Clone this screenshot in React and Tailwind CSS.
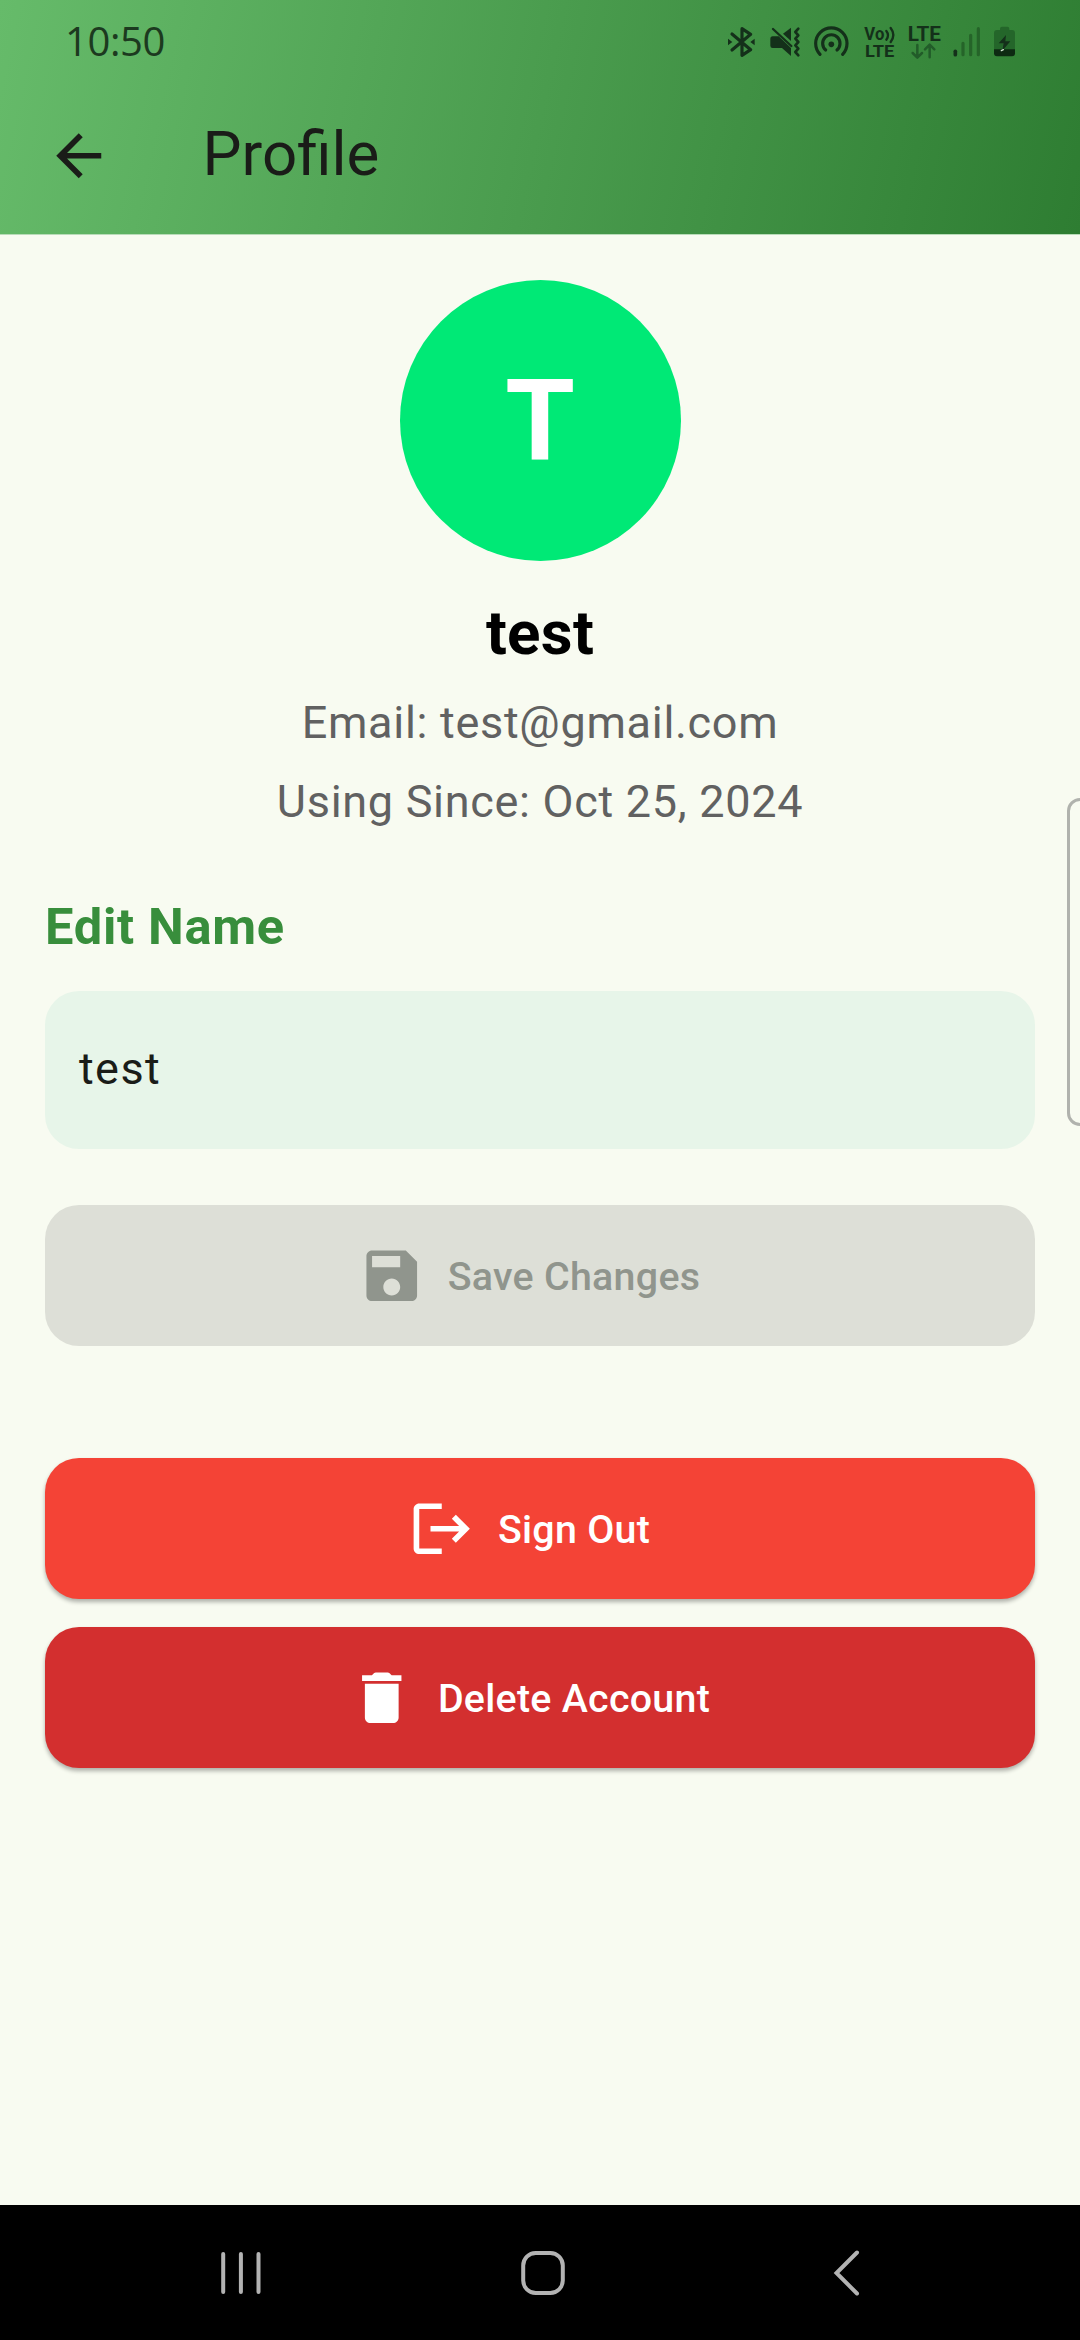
const INK = "#14301a";

function StatusIcons() {
  return (
    <div className="flex items-start">
      {/* Bluetooth */}
      <svg className="w-[28px] h-[32px]" viewBox="0 0 84 96" fill="none" stroke={INK} strokeWidth="9.5" strokeLinejoin="round" strokeLinecap="round">
        <path d="M12 24 L68 71 L42 88 V8 L68 25 L12 72" />
        <path d="M0 38 L13 48 L0 58Z M80 38 L67 48 L80 58Z" fill={INK} stroke="none" />
      </svg>
      {/* Muted, vibrating */}
      <svg className="ml-[14px] w-[31px] h-[32px]" viewBox="0 0 93 96" fill={INK}>
        <path d="M1 39 Q1 31 8 31 H26 L63 66 V90 L36 66 H8 Q1 66 1 59Z" />
        <path d="M63 5 V45 L39 23Z" />
        <path d="M9 9 L64 60" stroke={INK} strokeWidth="7" strokeLinecap="round" />
        <path d="M85 8 L76 18 L85 28 L76 38 L85 48 L76 58 L85 68 L76 78 L85 88" fill="none" stroke={INK} strokeWidth="8" strokeLinecap="round" strokeLinejoin="round" />
      </svg>
      {/* Hotspot */}
      <svg className="ml-[13px] w-[36px] h-[32px]" viewBox="0 0 108 96" fill="none" stroke={INK} strokeWidth="9.5" strokeLinecap="round">
        <path d="M18 85 A47 47 0 1 1 86 85" />
        <path d="M35 72 A26 26 0 1 1 69 72" />
        <circle cx="52" cy="55" r="8.5" fill={INK} stroke="none" />
      </svg>
      {/* VoLTE */}
      <svg className="ml-[14px] w-[32px] h-[32px] overflow-visible" viewBox="0 0 96 96" fill={INK} fontFamily="Roboto, sans-serif" fontWeight="700">
        <text x="1" y="43" fontSize="53" textLength="60" lengthAdjust="spacingAndGlyphs">Vo</text>
        <path d="M67 15 Q77 28 67 41 M80 6 Q96 27 80 48" fill="none" stroke={INK} strokeWidth="7" strokeLinecap="round" />
        <text x="3" y="93" fontSize="52" textLength="88" lengthAdjust="spacingAndGlyphs">LTE</text>
      </svg>
      {/* LTE data */}
      <svg className="ml-[12px] w-[34px] h-[34px] overflow-visible" viewBox="0 0 102 102" fill={INK} fontFamily="Roboto, sans-serif" fontWeight="700">
        <text x="-1" y="46" fontSize="62" textLength="100" lengthAdjust="spacingAndGlyphs">LTE</text>
        <path d="M28 57 V94 M14 81 L28 95 L42 81 M65 94 V57 M51 70 L65 56 L79 70" fill="none" stroke="#225c29" strokeWidth="7.5" strokeLinecap="round" strokeLinejoin="round" />
      </svg>
      {/* Signal */}
      <svg className="ml-[11px] w-[28px] h-[32px]" viewBox="0 0 84 96" strokeWidth="9.5" strokeLinecap="round">
        <path d="M7 76 V86" stroke={INK} strokeWidth="11" />
        <path d="M30 52 V86 M53 28 V86 M76 8 V86" stroke="#256429" />
      </svg>
      {/* Battery */}
      <svg className="ml-[13px] w-[22px] h-[32px]" viewBox="0 0 66 96">
        <path d="M18 12 V8 Q18 2 24 2 H40 Q46 2 46 8 V12 H54 Q63 12 63 21 V72 H0 V21 Q0 12 9 12Z" fill="#24662a" />
        <path d="M0 70 H63 V82 Q63 91 54 91 H9 Q0 91 0 82Z" fill="#0d2a12" />
        <path d="M36 27 L14 52 H29 L25 74 L49 46 H34Z" fill={INK} />
        <path d="M22 74 L28 71" stroke="#d8ead8" strokeWidth="4" strokeLinecap="round" />
      </svg>
    </div>
  );
}

function ActionButton({ className, path, children }) {
  return (
    <button className={`flex h-[141px] w-full items-center justify-center rounded-[34px] pr-[22px] text-[39.375px] font-medium tracking-[0.28px] ${className}`}>
      <svg className="mr-[22.5px] size-[67.5px]" viewBox="0 0 24 24" fill="currentColor">
        <path d={path} />
      </svg>
      <span className="pt-[2px]">{children}</span>
    </button>
  );
}

const SAVE = "M17 3H5c-1.11 0-2 .9-2 2v14c0 1.1.89 2 2 2h14c1.1 0 2-.9 2-2V7l-4-4zm-5 16c-1.66 0-3-1.34-3-3s1.34-3 3-3 3 1.34 3 3-1.34 3-3 3zm3-10H5V5h10v4z";
const LOGOUT = "M17 7l-1.41 1.41L18.17 11H8v2h10.17l-2.58 2.58L17 17l5-5zM4 5h8V3H4c-1.1 0-2 .9-2 2v14c0 1.1.9 2 2 2h8v-2H4V5z";
const TRASH = "M6 19c0 1.1.9 2 2 2h8c1.1 0 2-.9 2-2V7H6v12zM19 4h-3.5l-.71-.71c-.18-.18-.44-.29-.7-.29H9.91c-.26 0-.52.11-.7.29L8.5 4H5v2h14V4z";

export default function App() {
  return (
    <div className="relative flex h-[2340px] w-[1080px] flex-col overflow-hidden bg-[#f8fbf1] font-[Roboto,sans-serif]">
      <header className="flex h-[235px] shrink-0 flex-col border-b border-[#b9dcb9] bg-[linear-gradient(102.24deg,#66bb6a,#2e7d32)]">
        <div className="flex h-[78px] items-start justify-between pl-[65px] pr-[64px]">
          <span className="mt-[13px] font-['Open_Sans',sans-serif] text-[40px] leading-[56px] tracking-[-0.4px] text-[#1c3a1f]">10:50</span>
          <div className="mt-[26px]"><StatusIcons /></div>
        </div>
        <div className="flex h-[156px] items-center pl-[45px] text-[#1a1c18]">
          <svg className="size-[67.5px]" viewBox="0 0 24 24" fill="currentColor">
            <path d="M20 11H7.83l5.59-5.59L12 4l-8 8 8 8 1.41-1.41L7.83 13H20v-2z" />
          </svg>
          <h1 className="ml-[90px] pb-[4px] text-[61.875px] leading-[72px]">Profile</h1>
        </div>
      </header>

      <main className="flex flex-1 flex-col px-[45px] pt-[45px]">
        <div className="flex size-[281px] items-center justify-center self-center rounded-full bg-[#00e976] pt-[3px] text-[112.5px] font-bold text-white">T</div>
        <h2 className="mt-[37px] text-center text-[61.875px] leading-[71px] font-bold tracking-[0.3px] text-black">test</h2>
        <p className="mt-[22px] text-center text-[45px] leading-[63px] tracking-[0.7px] text-[#616161]">Email: test@gmail.com</p>
        <p className="mt-[16px] text-center text-[45px] leading-[63px] tracking-[0.7px] text-[#616161]">Using Since: Oct 25, 2024</p>
        <h3 className="mt-[57px] text-[50.625px] leading-[73px] font-bold tracking-[0.7px] text-[#388e3c]">Edit Name</h3>
        <div className="mt-[28px] flex h-[158px] items-center rounded-[34px] bg-[#e7f5e9] px-[34px] pb-[3px] text-[45px] tracking-[1.4px] text-[#1a1c18]">test</div>
        <ActionButton className="mt-[56px] bg-[#dddfd7] text-[#90958d]" path={SAVE}>Save Changes</ActionButton>
        <ActionButton className="mt-[112px] bg-[#f44336] text-white shadow-[0_3px_4px_rgba(0,0,0,0.3)]" path={LOGOUT}>Sign Out</ActionButton>
        <ActionButton className="mt-[28px] bg-[#d32f2f] text-white shadow-[0_3px_4px_rgba(0,0,0,0.3)]" path={TRASH}>Delete Account</ActionButton>
      </main>

      {/* Edge panel handle */}
      <div className="absolute top-[798px] -right-[20px] h-[328px] w-[33px] rounded-[13px] border-[3px] border-[#b0b2ad]" />

      <nav className="flex h-[135px] shrink-0 items-center bg-black pl-[221px] text-[#b3b3b3]">
        <svg className="h-[46px] w-[40px]" viewBox="0 0 40 46" fill="none" stroke="currentColor" strokeWidth="4" strokeLinecap="round">
          <path d="M2.2 4 V42 M19.9 4 V42 M37.5 4 V42" />
        </svg>
        <svg className="ml-[260px] h-[46px] w-[44px]" viewBox="0 0 44 46" fill="none" stroke="currentColor" strokeWidth="4">
          <rect x="2.2" y="3" width="39.6" height="40" rx="12.5" />
        </svg>
        <svg className="ml-[268px] h-[46px] w-[27px]" viewBox="0 0 27 46" fill="none" stroke="currentColor" strokeWidth="4" strokeLinecap="round">
          <path d="M24 2.5 L3.5 23 L24 43.5" />
        </svg>
      </nav>
    </div>
  );
}
